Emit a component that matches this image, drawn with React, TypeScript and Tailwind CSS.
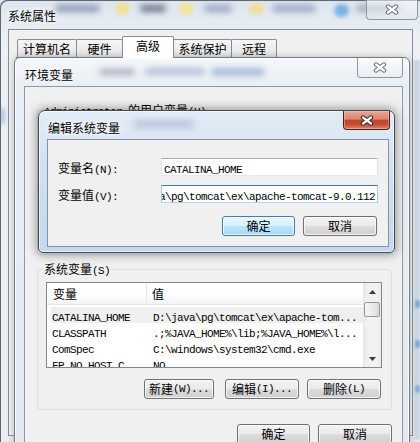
import React from 'react';

// Splits a label into CJK runs (Noto CJK 12px) and latin runs (6px-wide mono, like SimSun)
const CJK = /([\u3000-\u9fff\uff00-\uffef]+)/;

const T: React.FC<{ text: string }> = ({ text }) => (
  <>
    {text
      .split(CJK)
      .filter(Boolean)
      .map((part, i) =>
        CJK.test(part) ? (
          <span key={i} className="font-['Noto_Sans_CJK_SC',sans-serif] text-[12px]">
            {part}
          </span>
        ) : (
          <span key={i} className="whitespace-pre font-['Liberation_Mono',monospace] text-[11px] tracking-[-0.6px]">
            {part}
          </span>
        )
      )}
  </>
);

const CloseGlyph: React.FC<{ outline: string }> = ({ outline }) => (
  <svg width="14" height="11" viewBox="0 0 14 11">
    <path d="M3 2.5L11 8.5M11 2.5L3 8.5" stroke={outline} strokeWidth="4.4" strokeLinecap="round" />
    <path d="M3 2.5L11 8.5M11 2.5L3 8.5" stroke="#fff" strokeWidth="2.2" strokeLinecap="round" />
  </svg>
);

const Button: React.FC<{ label: string; width: string; isDefault?: boolean }> = ({ label, width, isDefault }) => (
  <div
    className={`flex h-[20px] shrink-0 items-center justify-center rounded-[3px] border leading-none shadow-[inset_0_0_0_1px_rgba(255,255,255,0.75)] ${width} ${
      isDefault
        ? 'border-[#3c7fb1] bg-[linear-gradient(180deg,#eaf6fd_0%,#d9f0fc_50%,#bee6fd_50%,#a7d9f5_100%)]'
        : 'border-[#707070] bg-[linear-gradient(180deg,#f2f2f2_0%,#ebebeb_50%,#dddddd_50%,#cfcfcf_100%)]'
    }`}
  >
    <T text={label} />
  </div>
);

const Tab: React.FC<{ label: string; width: string; selected?: boolean }> = ({ label, width, selected }) => (
  <div
    className={`-ml-px flex items-center justify-center rounded-t-[2px] border border-b-0 border-[#898c95] leading-none ${width} ${
      selected ? 'relative z-10 -mb-px h-[22px] bg-white pb-[3px]' : 'h-[18px] bg-[linear-gradient(180deg,#f6f6f6,#e3e3e3)]'
    }`}
  >
    <T text={label} />
  </div>
);

const GroupBox: React.FC<{ label: string; className: string; children?: React.ReactNode }> = ({ label, className, children }) => (
  <div className={`relative rounded-[3px] border border-[#d5dfe5] ${className}`}>
    <div className="absolute -top-[9px] left-[5px] bg-[#f0f0f0] px-px leading-[14px]">
      <T text={label} />
    </div>
    {children}
  </div>
);

const Input: React.FC<{ value: string; focused?: boolean }> = ({ value, focused }) => (
  <div
    className={`flex h-[18px] flex-1 items-center overflow-hidden whitespace-nowrap border bg-white leading-none ${
      focused
        ? 'justify-end border-[#3d7bad] border-x-[#a4c9e3] border-b-[#b7d5ee] pr-[2px]'
        : 'border-[#abadb3] border-x-[#e2e3ea] border-b-[#e3e9ef] pl-[2px]'
    }`}
  >
    <span className="shrink-0">
      <T text={value} />
    </span>
  </div>
);

const rows = [
  { name: 'CATALINA_HOME', value: 'D:\\java\\pg\\tomcat\\ex\\apache-tom...', selected: true },
  { name: 'CLASSPATH', value: '.;%JAVA_HOME%\\lib;%JAVA_HOME%\\l...' },
  { name: 'ComSpec', value: 'C:\\windows\\system32\\cmd.exe' },
  { name: 'FP_NO_HOST_C', value: 'NO' },
];

const Arrow: React.FC<{ down?: boolean }> = ({ down }) => (
  <svg width="7" height="4" viewBox="0 0 7 4">
    <path d={down ? 'M0 0H7L3.5 4Z' : 'M0 4H7L3.5 0Z'} fill="#3c3c3c" />
  </svg>
);

export default function App() {
  return (
    <div className="relative h-[442px] w-[420px] overflow-hidden bg-[linear-gradient(180deg,#dde6ee_0%,#edf1f5_10%,#e9eef3_100%)] text-black">
      {/* desktop seen blurred through the glass */}
      <div className="absolute left-[55px] top-[5px] h-[7px] w-[45px] rounded-full bg-[#8d9ab6] blur-[3px]" />
      <div className="absolute left-[116px] top-[3px] h-[11px] w-[13px] rounded-[3px] bg-[#f1df93] blur-[2px]" />
      <div className="absolute left-[140px] top-[5px] h-[7px] w-[26px] rounded-full bg-[#6f7587] blur-[3px]" />
      <div className="absolute left-[180px] top-[3px] h-[11px] w-[13px] rounded-[3px] bg-[#f3e29b] blur-[2px]" />
      <div className="absolute left-[204px] top-[5px] h-[7px] w-[28px] rounded-full bg-[#98a6c7] blur-[3px]" />
      <div className="absolute left-[250px] top-[3px] h-[11px] w-[13px] rounded-[3px] bg-[#f0de96] blur-[2px]" />
      <div className="absolute left-[272px] top-[5px] h-[7px] w-[44px] rounded-full bg-[#9aa7c8] blur-[3px]" />
      <div className="absolute left-[334px] top-[4px] h-[13px] w-[15px] rounded-full bg-[#7ab2e2] blur-[2px]" />
      <div className="absolute left-[356px] top-[5px] h-[7px] w-[44px] rounded-full bg-[#a2abbc] blur-[3px]" />
      <div className="absolute left-[414px] top-[60px] h-[380px] w-[6px] bg-[#c9d5e3] blur-[1px]" />
      <div className="absolute left-[415px] top-[300px] h-[8px] w-[5px] rounded-full bg-[#7ea6d6] blur-[1px]" />
      <div className="absolute left-[415px] top-[340px] h-[8px] w-[5px] rounded-full bg-[#7ea6d6] blur-[1px]" />
      <div className="absolute left-[415px] top-[385px] h-[8px] w-[5px] rounded-full bg-[#86acd9] blur-[1px]" />
      <div className="absolute left-0 top-[108px] h-[16px] w-[5px] rounded-full bg-[#a9c4e4] blur-[2px]" />

      {/* 系统属性 */}
      <div className="absolute inset-0 rounded-tl-[7px] shadow-[inset_1px_1px_0_#5d6874]">
        <div className="absolute left-[8px] top-[7px] leading-none [text-shadow:0_0_5px_#fff,0_0_8px_#fff]">
          <T text="系统属性" />
        </div>
        <div className="absolute right-[2px] top-0 flex h-[20px] w-[52px] items-center justify-center rounded-b-[4px] border border-t-0 border-[#8c97a4] bg-[linear-gradient(180deg,rgba(255,255,255,0.55),rgba(225,232,240,0.5))]">
          <CloseGlyph outline="#6b7682" />
        </div>
        <div className="absolute left-[8px] top-[29px] h-[407px] w-[405px] border border-[#838f9c] bg-[#f0f0f0]">
          <div className="flex h-[27px] items-end pl-[9px]">
            <Tab label="计算机名" width="w-[60px]" />
            <Tab label="硬件" width="w-[47px]" />
            <Tab label="高级" width="w-[52px]" selected />
            <Tab label="系统保护" width="w-[59px]" />
            <Tab label="远程" width="w-[46px]" />
          </div>
          <div className="mx-[7px] h-[374px] border border-[#898c95] bg-white" />
        </div>
      </div>

      {/* 环境变量 */}
      <div className="absolute left-[14px] top-[57px] h-[400px] w-[396px] rounded-t-[6px] border border-[#717c89] bg-[linear-gradient(180deg,#f4f7fa_0%,#e9eef4_30px,#e3e9ef_100%)] shadow-[0_0_6px_rgba(0,0,0,0.25),inset_0_0_0_1px_rgba(255,255,255,0.7)]">
        <div className="absolute left-[84px] top-[11px] h-[6px] w-[36px] rounded-full bg-[#a7aebf] blur-[3px]" />
        <div className="absolute left-[130px] top-[10px] h-[7px] w-[60px] rounded-full bg-[#b3bfd6] blur-[3px]" />
        <div className="absolute left-[196px] top-[10px] h-[8px] w-[54px] rounded-full bg-[#a9bcdb] blur-[3px]" />
        <div className="absolute left-[10px] top-[8px] leading-none [text-shadow:0_0_5px_#fff,0_0_8px_#fff]">
          <T text="环境变量" />
        </div>
        <div className="absolute right-[6px] top-0 flex h-[20px] w-[46px] items-center justify-center rounded-b-[4px] border border-t-0 border-[#8c97a4] bg-[linear-gradient(180deg,rgba(255,255,255,0.6),rgba(228,234,241,0.5))]">
          <CloseGlyph outline="#6b7682" />
        </div>
        <div className="absolute bottom-0 left-[9px] right-[6px] top-[28px] border border-[#8d9aa8] bg-[#f0f0f0]">
          <div className="flex flex-col pl-[12px] pr-[10px] pt-[23px]">
            <GroupBox label="Administrator 的用户变量(U)" className="h-[145px]" />
            <GroupBox label="系统变量(S)" className="mt-[14px] h-[141px]">
              <div className="flex flex-col pl-[8px] pr-[9px] pt-[12px]">
                <div className="flex h-[86px] border border-[#828790] bg-white">
                  <div className="flex-1 overflow-hidden">
                    <div className="flex h-[22px] border-b border-[#e5e5e5] bg-[linear-gradient(180deg,#ffffff_0%,#ffffff_50%,#f3f4f6_100%)] leading-none">
                      <div className="flex w-[100px] items-center border-r border-[#e5e5e5] pl-[6px]">
                        <T text="变量" />
                      </div>
                      <div className="flex items-center pl-[5px]">
                        <T text="值" />
                      </div>
                    </div>
                    <div className="pl-[4px] pt-[2px]">
                      {rows.map((row) => (
                        <div
                          key={row.name}
                          className={`flex h-4 items-center whitespace-nowrap leading-none ${row.selected ? 'bg-[#efefef]' : ''}`}
                        >
                          <div className="w-[96px] pl-px">
                            <T text={row.name} />
                          </div>
                          <div className="pl-[6px]">
                            <T text={row.value} />
                          </div>
                        </div>
                      ))}
                    </div>
                  </div>
                  <div className="flex w-[18px] flex-col bg-[linear-gradient(90deg,#e6e6e6_0%,#f1f1f1_25%,#f1f1f1_80%,#e9e9e9_100%)]">
                    <div className="flex h-[17px] items-center justify-center">
                      <Arrow />
                    </div>
                    <div className="mx-px mt-[2px] h-[15px] rounded-[2px] border border-[#979797] bg-[linear-gradient(90deg,#f5f5f5_0%,#ececec_50%,#d8d8d8_100%)]" />
                    <div className="flex-1" />
                    <div className="flex h-[17px] items-center justify-center">
                      <Arrow down />
                    </div>
                  </div>
                </div>
                <div className="mt-[11px] flex justify-end pr-px">
                  <Button label="新建(W)..." width="w-[70px]" />
                  <div className="w-[11px]" />
                  <Button label="编辑(I)..." width="w-[74px]" />
                  <div className="w-[8px]" />
                  <Button label="删除(L)" width="w-[74px]" />
                </div>
              </div>
            </GroupBox>
            <div className="mt-[14px] flex justify-end gap-[8px]">
              <Button label="确定" width="w-[73px]" />
              <Button label="取消" width="w-[74px]" />
            </div>
          </div>
        </div>
      </div>

      {/* 编辑系统变量 */}
      <div className="absolute left-[38px] top-[110px] h-[143px] w-[357px] rounded-b-[5px] rounded-t-[7px] border border-[#3f4a57] bg-[linear-gradient(180deg,#e2ecf6_0%,#d2e1f0_40%,#c4d7ec_100%)] shadow-[0_0_10px_2px_rgba(0,0,0,0.35),inset_0_0_0_1px_rgba(255,255,255,0.6)]">
        <div className="absolute left-[95px] top-[9px] h-[8px] w-[60px] rounded-full bg-[#b7c6dc] blur-[3px]" />
        <div className="absolute left-[9px] top-[8px] leading-none [text-shadow:0_0_5px_#fff,0_0_8px_#fff]">
          <T text="编辑系统变量" />
        </div>
        <div className="absolute right-[4px] top-0 flex h-[19px] w-[47px] items-center justify-center rounded-b-[4px] border border-t-0 border-[#4a2118] bg-[linear-gradient(180deg,#eaa996_0%,#d98670_45%,#c0442b_52%,#c6503a_78%,#e08a70_100%)] shadow-[inset_0_0_0_1px_rgba(255,200,180,0.45)]">
          <CloseGlyph outline="#3a2a28" />
        </div>
        <div className="absolute bottom-[5px] left-[8px] right-[5px] top-[28px] border border-[#8193a9] bg-[#f0f0f0]">
          <div className="flex flex-col px-[10px] pt-[18px]">
            <div className="flex h-[18px] items-center">
              <div className="w-[103px] leading-none">
                <T text="变量名(N):" />
              </div>
              <Input value="CATALINA_HOME" />
            </div>
            <div className="mt-[9px] flex h-[18px] items-center">
              <div className="w-[103px] leading-none">
                <T text="变量值(V):" />
              </div>
              <Input value="D:\java\pg\tomcat\ex\apache-tomcat-9.0.112" focused />
            </div>
            <div className="mt-[13px] flex justify-end gap-[8px] pr-px">
              <Button label="确定" width="w-[73px]" isDefault />
              <Button label="取消" width="w-[74px]" />
            </div>
          </div>
        </div>
      </div>
    </div>
  );
}
